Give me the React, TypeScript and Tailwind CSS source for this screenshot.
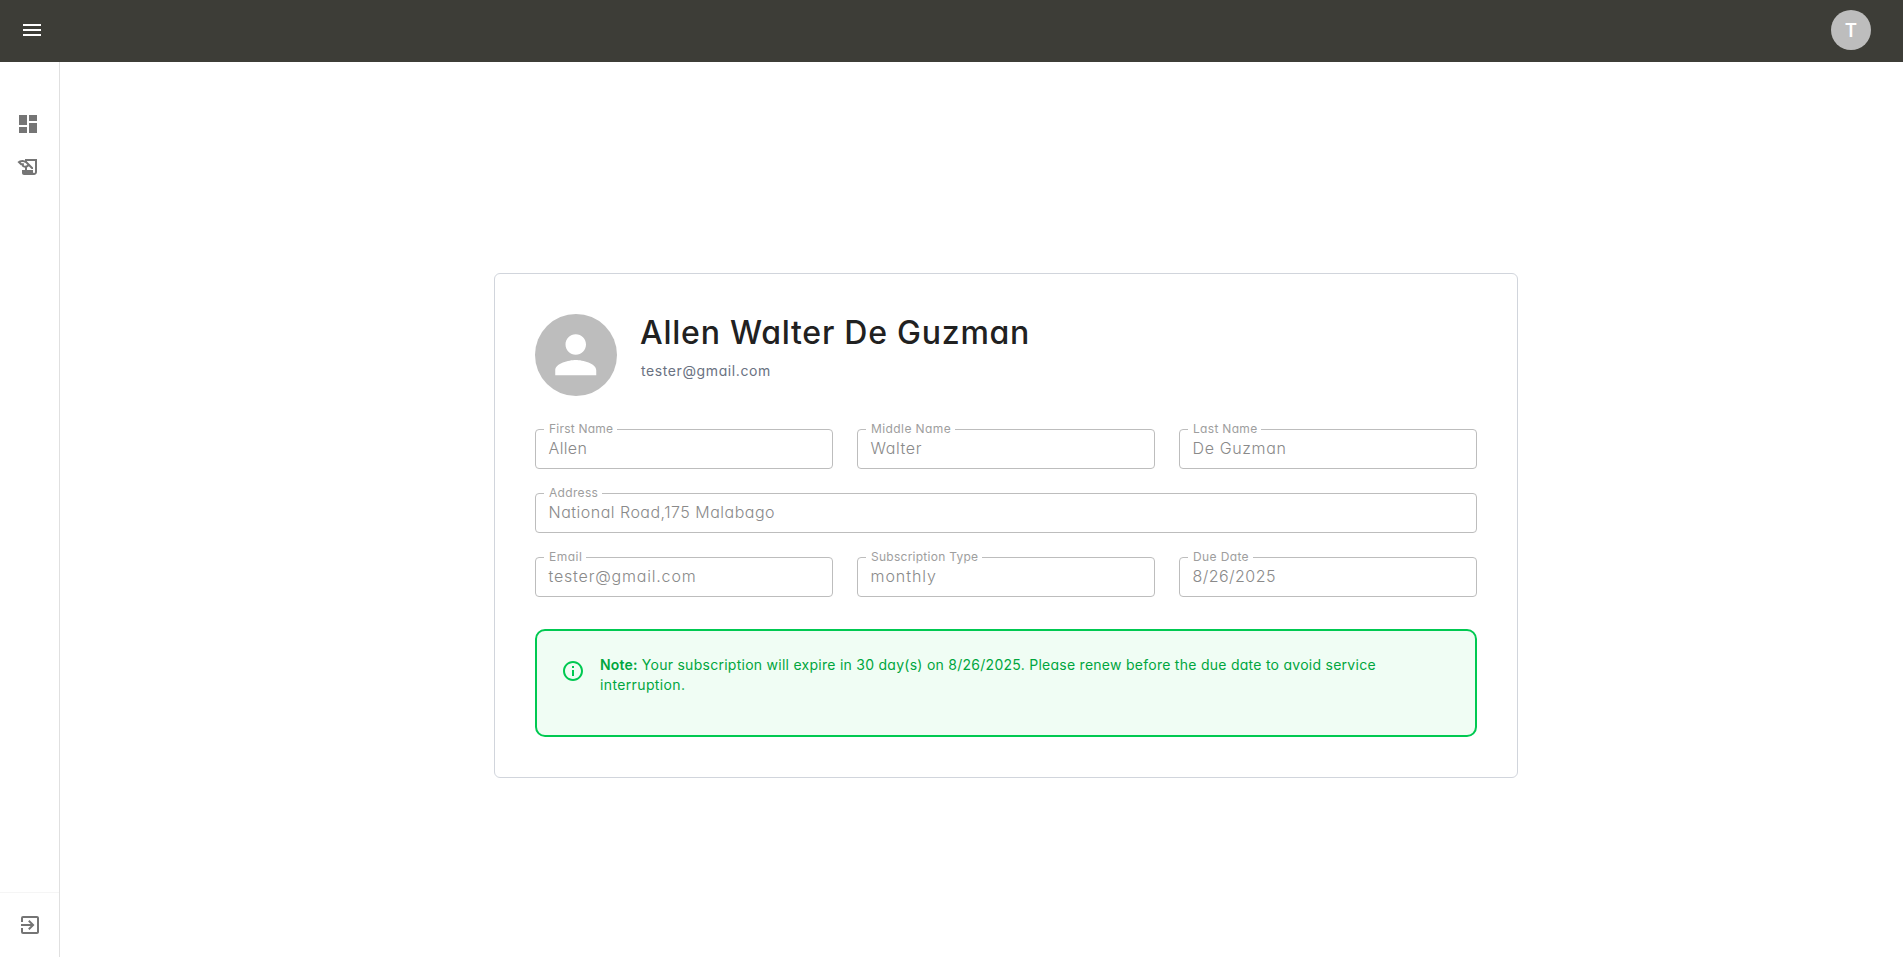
import {
  MdDashboard,
  MdExitToApp,
  MdHistoryEdu,
  MdMenu,
  MdOutlineInfo,
  MdPerson,
} from "react-icons/md";

type FieldProps = {
  label: string;
  value: string;
  labelClass: string;
  valueClass: string;
  className?: string;
};

function Field({ label, value, labelClass, valueClass, className = "" }: FieldProps) {
  return (
    <fieldset
      className={`-mt-[9px] h-[49px] min-w-0 rounded border border-[#bdbdbd] pl-[13px] text-[#9e9e9e] ${className}`}
    >
      <legend className="-ml-[5px] h-[18px] pl-[5px] pr-[4px] text-[12px] leading-[18px]">
        <span className={`block whitespace-nowrap ${labelClass}`}>{label}</span>
      </legend>
      <p className={`-mt-[1px] -ml-[0.5px] whitespace-nowrap text-[16px] font-light leading-[23px] text-[#8a8a8a] ${valueClass}`}>
        {value}
      </p>
    </fieldset>
  );
}

export default function App() {
  return (
    <div className="flex h-screen flex-col overflow-hidden bg-white font-['Inter','Open_Sans',sans-serif] [font-feature-settings:'cv11']">
      <header className="flex h-[62px] shrink-0 items-center justify-between bg-[#3d3d37] pb-[2px] pl-5 pr-8">
        <button aria-label="Menu" className="text-white">
          <MdMenu size={24} />
        </button>
        <div className="flex size-10 items-center justify-center rounded-full bg-[#bdbdbd] font-['Open_Sans',sans-serif] text-[20px] font-semibold text-white">
          T
        </div>
      </header>

      <div className="flex min-h-0 flex-1">
        <aside className="flex w-[60px] shrink-0 flex-col justify-between border-r border-[#e0e0e0] text-[#757575]">
          <nav className="flex flex-col gap-[19px] pl-4 pt-[50px]">
            <MdDashboard size={24} />
            <MdHistoryEdu size={24} />
          </nav>
          <div className="h-[65px] border-t border-[#f5f5f5] pl-[18px] pt-5">
            <MdExitToApp size={24} />
          </div>
        </aside>

        <main className="flex flex-1 items-start pl-[434px] pt-[211px]">
          <section className="h-[505px] w-[1024px] shrink-0 rounded-md border border-gray-300 p-10">
            <div className="flex h-[82px] gap-6">
              <div className="flex size-[82px] items-center justify-center rounded-full bg-[#bdbdbd] text-white">
                <MdPerson size={61.5} />
              </div>
              <div>
                <h1 className="-ml-[1px] whitespace-nowrap text-[32px] font-medium leading-[38px] tracking-[0.76px] text-[#212121]">
                  Allen Walter De Guzman
                </h1>
                <p className="mt-[9px] text-[14px] leading-5 tracking-[0.6px] text-gray-500">
                  tester@gmail.com
                </p>
              </div>
            </div>

            <div className="mt-[33px] grid grid-cols-3 gap-6">
              <Field label="First Name" value="Allen" labelClass="tracking-[0.22px]" valueClass="tracking-[0.37px]" />
              <Field label="Middle Name" value="Walter" labelClass="tracking-[0.41px]" valueClass="tracking-[0.59px]" />
              <Field label="Last Name" value="De Guzman" labelClass="tracking-[0.31px]" valueClass="tracking-[0.63px]" />
              <Field
                className="col-span-3"
                label="Address"
                value="National Road,175 Malabago"
                labelClass="tracking-[0.33px]"
                valueClass="tracking-[0.49px]"
              />
              <Field label="Email" value="tester@gmail.com" labelClass="tracking-[0.5px]" valueClass="tracking-[0.81px]" />
              <Field label="Subscription Type" value="monthly" labelClass="tracking-[0.26px]" valueClass="tracking-[0.96px]" />
              <Field label="Due Date" value="8/26/2025" labelClass="tracking-[0.38px]" valueClass="tracking-[0.44px]" />
            </div>

            <div className="mt-8 flex h-[108px] gap-[15px] rounded-[10px] border-2 border-[#00c951] bg-[#f0fdf4] pl-6 pt-6">
              <MdOutlineInfo size={24} className="mt-1 shrink-0 text-[#00c951]" />
              <p className="text-[14px] leading-5 text-[#00a63e]">
                <span className="mr-[4px] font-semibold tracking-[0.22px]">Note:</span>
                <span className="tracking-[0.265px]">
                  Your subscription will expire in 30 day(s) on 8/26/2025. Please renew before the due date to avoid service
                </span>
                <br />
                <span className="tracking-[0.37px]">interruption.</span>
              </p>
            </div>
          </section>
        </main>
      </div>
    </div>
  );
}
